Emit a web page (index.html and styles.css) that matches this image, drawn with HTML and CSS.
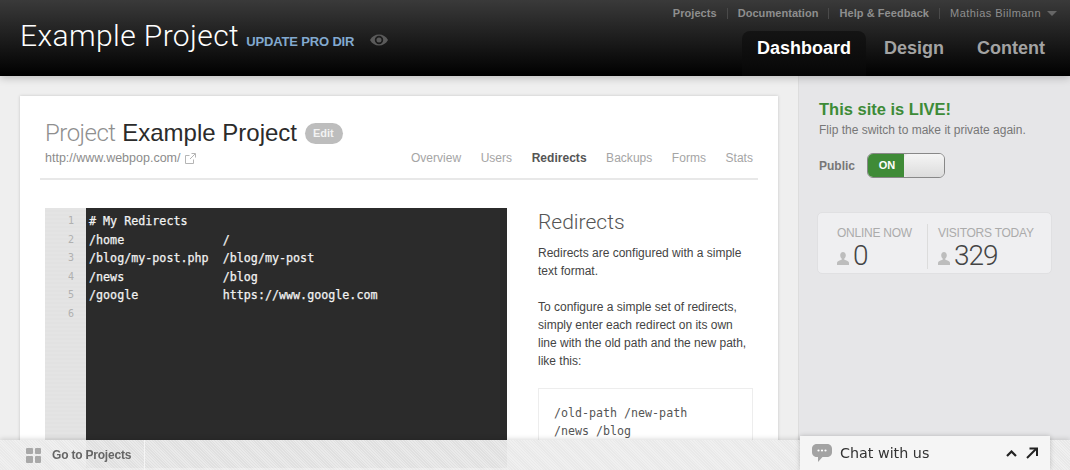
FILE: index.html
```html
<!DOCTYPE html>
<html lang="en">
<head>
<meta charset="utf-8">
<title>Example Project</title>
<link rel="stylesheet" href="styles.css">
</head>
<body>
<header class="topbar">
  <div class="brand">
    <h1 class="brand-title">Example Project</h1>
    <a class="brand-link">UPDATE PRO DIR</a>
    <svg class="eye" width="18" height="12" viewBox="0 0 18 12"><path fill="#5a5a5a" fill-rule="evenodd" d="M0 6C2 2.400 5.200 .5 9 .5S16 2.400 18 6c-2 3.600-5.200 5.500-9 5.500S2 9.600 0 6zm9-4.200A4.200 4.200 0 1 0 9 10.200 4.200 4.200 0 0 0 9 1.800zM9 3.500a2.500 2.500 0 1 1 0 5 2.500 2.500 0 0 1 0-5z"/></svg>
  </div>
  <div class="topnav">
    <nav class="util">
      <a class="util-link">Projects</a>
      <a class="util-link">Documentation</a>
      <a class="util-link">Help &amp; Feedback</a>
      <a class="util-user">Mathias Biilmann</a>
      <span class="caret"></span>
    </nav>
    <nav class="tabs">
      <a class="tab tab-active">Dashboard</a>
      <a class="tab">Design</a>
      <a class="tab">Content</a>
    </nav>
  </div>
</header>
<div class="layout">
  <main class="content">
    <section class="card">
      <div class="card-head">
        <div class="title-row">
          <h2 class="title"><span class="title-muted">Project</span> Example Project</h2>
          <span class="edit">Edit</span>
        </div>
        <div class="sub-row">
          <div class="url">
            <span>http://www.webpop.com/</span>
            <svg width="11" height="11" viewBox="0 0 11 11" fill="none" stroke="#b5b5b5"><path d="M8.500 6.500v4h-8v-8h4"/><path d="M5 6l5-5M6.500 .5h4v4"/></svg>
          </div>
          <nav class="subnav">
            <a class="sub">Overview</a>
            <a class="sub">Users</a>
            <a class="sub sub-active">Redirects</a>
            <a class="sub">Backups</a>
            <a class="sub">Forms</a>
            <a class="sub">Stats</a>
          </nav>
        </div>
      </div>
      <div class="card-body">
        <div class="editor">
          <div class="gutter">
            <div>1</div><div>2</div><div>3</div><div>4</div><div>5</div><div>6</div>
          </div>
          <pre class="code"># My Redirects
/home              /
/blog/my-post.php  /blog/my-post
/news              /blog
/google            https://www.google.com
</pre>
        </div>
        <aside class="help">
          <h3 class="help-title">Redirects</h3>
          <p class="help-p">Redirects are configured with a simple text format.</p>
          <p class="help-p">To configure a simple set of redirects, simply enter each redirect on its own line with the old path and the new path, like this:</p>
          <pre class="sample">/old-path /new-path
/news /blog</pre>
        </aside>
      </div>
    </section>
  </main>
  <aside class="side">
    <h3 class="live">This site is LIVE!</h3>
    <p class="live-sub">Flip the switch to make it private again.</p>
    <div class="public">
      <span class="public-label">Public</span>
      <div class="switch">
        <span class="switch-on">ON</span>
        <span class="switch-knob"></span>
      </div>
    </div>
    <div class="stats">
      <div class="stat">
        <div class="stat-label">ONLINE NOW</div>
        <div class="stat-value">
          <svg class="person" width="12" height="13" viewBox="0 0 12 13"><path fill="#bdbdbd" d="M6 0c1.700 0 2.800 1.300 2.800 3.200 0 1.500-.7 2.800-1.500 3.400v1.100c2.200.6 4.700 1.500 4.700 3V13H0v-2.300c0-1.500 2.500-2.400 4.700-3V6.600C3.900 6 3.200 4.700 3.200 3.200 3.200 1.300 4.300 0 6 0z"/></svg>
          <span>0</span>
        </div>
      </div>
      <div class="stat stat-second">
        <div class="stat-label">VISITORS TODAY</div>
        <div class="stat-value">
          <svg class="person" width="12" height="13" viewBox="0 0 12 13"><path fill="#bdbdbd" d="M6 0c1.700 0 2.800 1.300 2.800 3.200 0 1.500-.7 2.800-1.500 3.400v1.100c2.200.6 4.700 1.500 4.700 3V13H0v-2.300c0-1.500 2.500-2.400 4.700-3V6.600C3.900 6 3.200 4.700 3.200 3.200 3.200 1.300 4.300 0 6 0z"/></svg>
          <span>329</span>
        </div>
      </div>
    </div>
  </aside>
</div>
<footer class="bottombar">
  <a class="goto">
    <span class="grid-icon"><i></i><i></i><i></i><i></i></span>
    <span>Go to Projects</span>
  </a>
</footer>
<div class="chat">
  <svg width="20" height="19" viewBox="0 0 20 19"><path fill="#a3a3a3" d="M5 0h10c2.800 0 5 2 5 4.800v3.400c0 2.800-2.200 4.800-5 4.800H10.500L6 18v-5H5c-2.800 0-5-2-5-4.800V4.800C0 2 2.200 0 5 0z"/><g fill="#fff"><circle cx="6.500" cy="6.500" r="1.100"/><circle cx="10" cy="6.500" r="1.100"/><circle cx="13.500" cy="6.500" r="1.100"/></g></svg>
  <span class="chat-text">Chat with us</span>
  <svg class="chat-up" width="11" height="7" viewBox="0 0 11 7" fill="none" stroke="#222" stroke-width="2.200"><path d="M1 6l4.500-4.500L10 6"/></svg>
  <svg width="12" height="12" viewBox="0 0 12 12" fill="none" stroke="#222" stroke-width="2"><path d="M1 11L10 2"/><path d="M3.500 1.500h7.500V9"/></svg>
</div>
</body>
</html>
```
FILE: styles.css
```css
* { box-sizing: border-box; }
html, body { margin: 0; height: 100%; overflow: hidden; }
body {
  font-family: "Liberation Sans", Arial, sans-serif;
  background: #efefef;
  display: flex;
  flex-direction: column;
  color: #444;
}
h1, h2, h3, p, pre { margin: 0; font-weight: normal; }

.topbar {
  flex: 0 0 76px;
  height: 76px;
  display: flex;
  justify-content: space-between;
  background: linear-gradient(#3a3a3a, #000);
  box-shadow: 0 2px 8px rgba(0,0,0,.22);
  position: relative;
  z-index: 2;
}
.brand { display: flex; align-items: baseline; padding: 18px 0 0 20px; }
.brand-title { font-family: Roboto, "Liberation Sans", sans-serif; font-weight: 300; font-size: 30px; line-height: 35px; color: #fff; letter-spacing: .4px; }
.brand-link { margin-left: 7px; font-size: 13px; font-weight: bold; color: #82a9cf; letter-spacing: -.15px; }
.eye { margin-left: 16px; margin-bottom: -1px; }

.topnav { display: flex; flex-direction: column; align-items: flex-end; padding-right: 10px; }
.util { display: flex; align-items: center; height: 26px; padding-right: 3px; font-size: 11px; color: #8e8e8e; font-weight: bold; }
.util-link { padding-right: 10px; margin-right: 10px; border-right: 1px solid #4a4a4a; line-height: 11px; letter-spacing: .06px; }
.util-user { font-weight: normal; letter-spacing: .45px; }
.caret { width: 0; height: 0; margin-left: 6px; border: 5px solid transparent; border-top-color: #666; border-bottom: 0; }
.tabs { display: flex; gap: 3px; margin-top: 5px; }
.tab { padding: 0 15px; height: 45px; line-height: 34px; font-size: 18px; font-weight: bold; color: #a3a3a3; border-radius: 8px 8px 0 0; }
.tab-active { color: #fff; background: linear-gradient(#141414, #0b0b0b 70%, #050505); }

.layout { flex: 1; display: flex; min-height: 0; }
.content { flex: 0 0 799px; padding: 20px 20px 0; border-right: 1px solid #ddd; overflow: hidden; }
.side { flex: 1; background: #e6e6e8; padding: 24px 18px 0 20px; }

.card { background: #fff; height: 400px; padding: 24px 20px 0; box-shadow: 0 0 3px rgba(0,0,0,.18); }
.card-head { border-bottom: 2px solid #e8e8e8; padding: 0 5px; height: 60px; }
.title-row { display: flex; align-items: center; height: 26px; }
.title { font-size: 24px; color: #2b2b2b; line-height: 26px; }
.title-muted { font-family: Roboto, "Liberation Sans", sans-serif; font-weight: 300; color: #8f8f8f; letter-spacing: -.5px; }
.edit { margin-left: 8px; background: #bdbdbd; color: #f2f2f2; font-size: 11px; font-weight: bold; border-radius: 11px; padding: 0 8px; line-height: 21px; height: 21px; width: 38px; }
.sub-row { display: flex; justify-content: space-between; align-items: center; height: 20px; margin-top: 2px; font-size: 12px; }
.url { display: flex; align-items: center; gap: 5px; color: #8c8c8c; font-size: 12.500px; }
.subnav { display: flex; gap: 19.500px; color: #a5a5a5; }
.sub { letter-spacing: .03px; }
.sub-active { color: #555; font-weight: bold; }

.card-body { display: flex; padding: 28px 5px 0; }
.editor { display: flex; width: 462px; height: 260px; background: #2b2b2b; flex: none; }
.gutter { width: 41px; background: repeating-linear-gradient(#e4e4e4 0 2px, #e2e2e2 2px 4px); color: #b0b0b0; font: 10px/18.500px "DejaVu Sans Mono", monospace; text-align: right; padding: 4px 12px 0 0; }
.code { flex: 1; color: #f2f2f2; font: 11.700px/18.500px "DejaVu Sans Mono", monospace; padding: 4px 0 0 3px; -webkit-text-stroke: .25px #f2f2f2; }
.help { margin-left: 31px; width: 215px; font-size: 12px; line-height: 18px; color: #444; }
.help-title { font-family: Roboto, "Liberation Sans", sans-serif; font-weight: 300; font-size: 21px; line-height: 28px; color: #555; margin-bottom: 8px; }
.help-p { margin-bottom: 18px; }
.sample { border: 1px solid #ededed; padding: 15px 15px; font: 11.650px/18px "DejaVu Sans Mono", monospace; color: #555; margin-top: 18px; height: 100px; }

.live { font-size: 16.500px; font-weight: bold; color: #3d8b37; line-height: 19px; }
.live-sub { font-size: 12px; color: #777; line-height: 15px; margin-top: 4px; }
.public { display: flex; align-items: center; margin-top: 15px; }
.public-label { font-size: 12px; font-weight: bold; color: #777; width: 48px; }
.switch { display: flex; width: 78px; height: 25px; border: 1px solid #888; border-radius: 6px; overflow: hidden; background: #e6e6e6; }
.switch-on { width: 36px; background: #3f8b37; color: #fff; font-size: 11px; font-weight: bold; line-height: 23px; text-align: center; padding-left: 2px; }
.switch-knob { flex: 1; background: linear-gradient(#f5f5f5, #dcdcdc); border-radius: 5px 0 0 5px; }
.stats { display: flex; width: 235px; height: 62px; margin: 34px 0 0 -2px; background: #efeff1; border: 1px solid #e0e0e2; border-radius: 5px; padding: 11px 0 4px; }
.stat { padding-left: 19px; width: 109px; }
.stat-second { flex: 1; padding-left: 10px; border-left: 1px solid #dcdcdc; }
.stat-label { font-size: 12px; color: #ababab; line-height: 19px; letter-spacing: -.25px; }
.stat-value { display: flex; align-items: baseline; font-family: Roboto, "Liberation Sans", sans-serif; font-weight: 300; font-size: 28px; line-height: 26px; letter-spacing: -1px; color: #444; gap: 4px; }

.bottombar { position: fixed; left: 0; right: 0; bottom: 0; height: 30px; background: rgba(232,232,232,.96) repeating-linear-gradient(45deg, transparent 0 1px, rgba(255,255,255,.3) 1px 2px); box-shadow: 0 -1px 5px rgba(0,0,0,.15); z-index: 3; display: flex; }
.goto { display: flex; align-items: center; gap: 11px; width: 145px; padding-left: 26px; border-right: 1px solid #f5f5f5; font-size: 12px; font-weight: bold; color: #666; letter-spacing: -.2px; }
.grid-icon { display: grid; grid-template-columns: 6.500px 6.500px; gap: 2px; }
.grid-icon i { height: 6.500px; background: #a8a8a8; border-radius: 1px; }
.chat { position: fixed; left: 800px; bottom: 0; width: 250px; height: 34px; background: #f5f5f5; box-shadow: 0 0 5px rgba(0,0,0,.2); z-index: 4; display: flex; align-items: center; padding: 0 12px 0 12px; gap: 8px; }
.chat-text { flex: 1; font: 14.300px "DejaVu Sans", sans-serif; color: #333; }
.chat-up { margin-right: 1px; }
```
